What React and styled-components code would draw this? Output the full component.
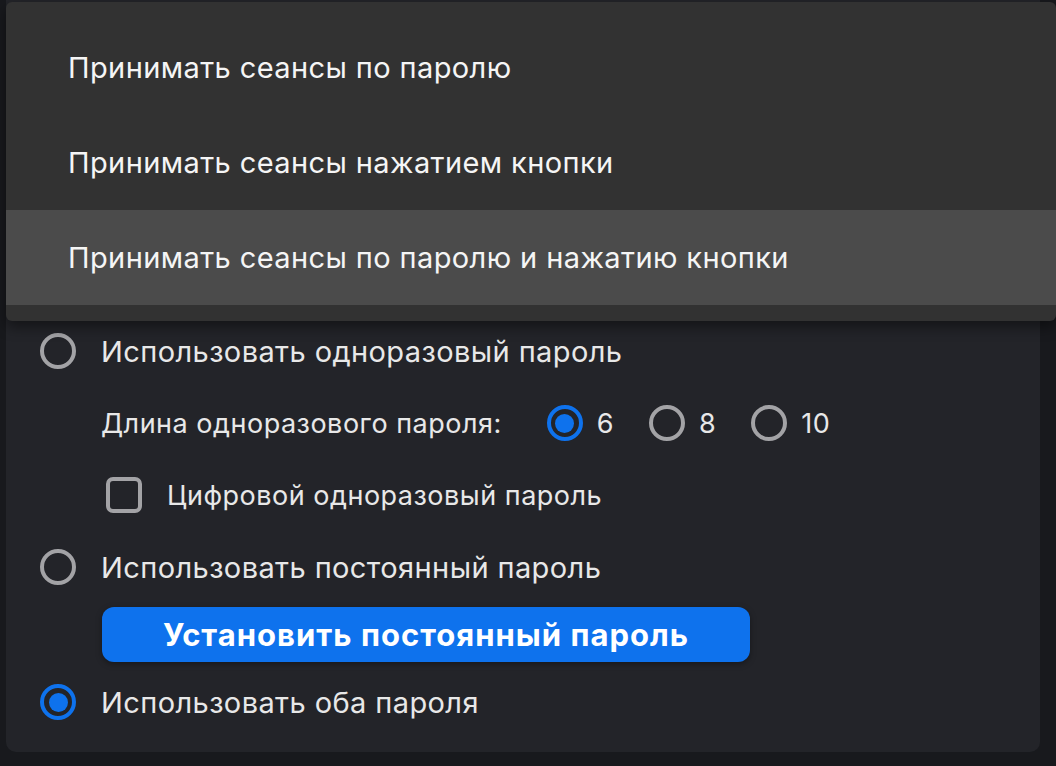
import styled, { createGlobalStyle } from 'styled-components'

const GlobalStyle = createGlobalStyle`
  html, body {
    margin: 0;
    padding: 0;
    background: #18191d;
  }
  body {
    font-family: Inter, "Noto Sans", "Liberation Sans", sans-serif;
    -webkit-font-smoothing: antialiased;
  }
`

const Page = styled.div`
  position: relative;
  width: 1056px;
  height: 766px;
  padding: 0 16px 14px 6px;
  box-sizing: border-box;
  overflow: hidden;
`

const Panel = styled.div`
  height: 100%;
  box-sizing: border-box;
  background: #232429;
  border-radius: 0 0 10px 10px;
  padding: 333px 0 0 34px;
  display: flex;
  flex-direction: column;
  gap: 36px;
`

const Group = styled.div`
  display: flex;
  flex-direction: column;
  gap: 22px;
`

const Row = styled.div`
  display: flex;
  align-items: center;
  height: 36px;
  padding-left: ${({ $indent }) => $indent || 0}px;
  gap: ${({ $gap }) => $gap ?? 25}px;
`

const Label = styled.span`
  font-size: ${({ $small }) => ($small ? 27 : 29)}px;
  letter-spacing: ${({ $small }) => ($small ? 0.5 : 0.4)}px;
  color: #e8e8e8;
  white-space: nowrap;
`

const RadioCircle = styled.span`
  width: 36px;
  height: 36px;
  box-sizing: border-box;
  border-radius: 50%;
  border: 4px solid ${({ $on }) => ($on ? '#0e72ed' : '#a3a3a6')};
  display: flex;
  align-items: center;
  justify-content: center;
  flex-shrink: 0;

  &::after {
    content: '';
    display: ${({ $on }) => ($on ? 'block' : 'none')};
    width: 19px;
    height: 19px;
    border-radius: 50%;
    background: #0e72ed;
  }
`

const Choices = styled.div`
  display: flex;
  align-items: center;
  gap: 35px;
  margin-left: 45px;
`

const Choice = styled.div`
  display: flex;
  align-items: center;
  gap: 14px;
`

const Checkbox = styled.span`
  width: 36px;
  height: 36px;
  box-sizing: border-box;
  border-radius: 7px;
  border: 4px solid #a3a3a6;
  flex-shrink: 0;
`

const Button = styled.button`
  margin-left: 62px;
  width: 648px;
  height: 55px;
  border: none;
  border-radius: 12px;
  background: #0e72ed;
  color: #ffffff;
  font-family: inherit;
  font-size: 31px;
  font-weight: 700;
  letter-spacing: 1px;
  box-shadow: 0 2px 6px rgba(0, 0, 0, 0.35);
  cursor: pointer;
`

const Menu = styled.div`
  position: absolute;
  top: 2px;
  left: 6px;
  right: 0;
  padding: 18px 0 16px;
  background: #323232;
  border-radius: 6px;
  box-shadow: 0 6px 14px rgba(0, 0, 0, 0.45);
`

const MenuItem = styled.div`
  height: 95px;
  display: flex;
  align-items: center;
  padding-left: 62px;
  font-size: 29px;
  letter-spacing: 0.4px;
  color: #f5f5f5;
  background: ${({ $active }) => ($active ? '#4b4b4b' : 'transparent')};
`

const MENU = [
  'Принимать сеансы по паролю',
  'Принимать сеансы нажатием кнопки',
  'Принимать сеансы по паролю и нажатию кнопки',
]

const LENGTHS = [
  { value: '6', on: true },
  { value: '8', on: false },
  { value: '10', on: false },
]

function App() {
  return (
    <>
      <GlobalStyle />
      <Page>
        <Panel>
          <Row>
            <RadioCircle />
            <Label>Использовать одноразовый пароль</Label>
          </Row>
          <Row $indent={61} $gap={0}>
            <Label $small>Длина одноразового пароля:</Label>
            <Choices>
              {LENGTHS.map(({ value, on }) => (
                <Choice key={value}>
                  <RadioCircle $on={on} />
                  <Label $small>{value}</Label>
                </Choice>
              ))}
            </Choices>
          </Row>
          <Row $indent={66}>
            <Checkbox />
            <Label $small>Цифровой одноразовый пароль</Label>
          </Row>
          <Group>
            <Row>
              <RadioCircle />
              <Label>Использовать постоянный пароль</Label>
            </Row>
            <Button>Установить постоянный пароль</Button>
            <Row>
              <RadioCircle $on />
              <Label>Использовать оба пароля</Label>
            </Row>
          </Group>
        </Panel>
        <Menu>
          {MENU.map((label, i) => (
            <MenuItem key={label} $active={i === MENU.length - 1}>
              {label}
            </MenuItem>
          ))}
        </Menu>
      </Page>
    </>
  )
}

export default App
